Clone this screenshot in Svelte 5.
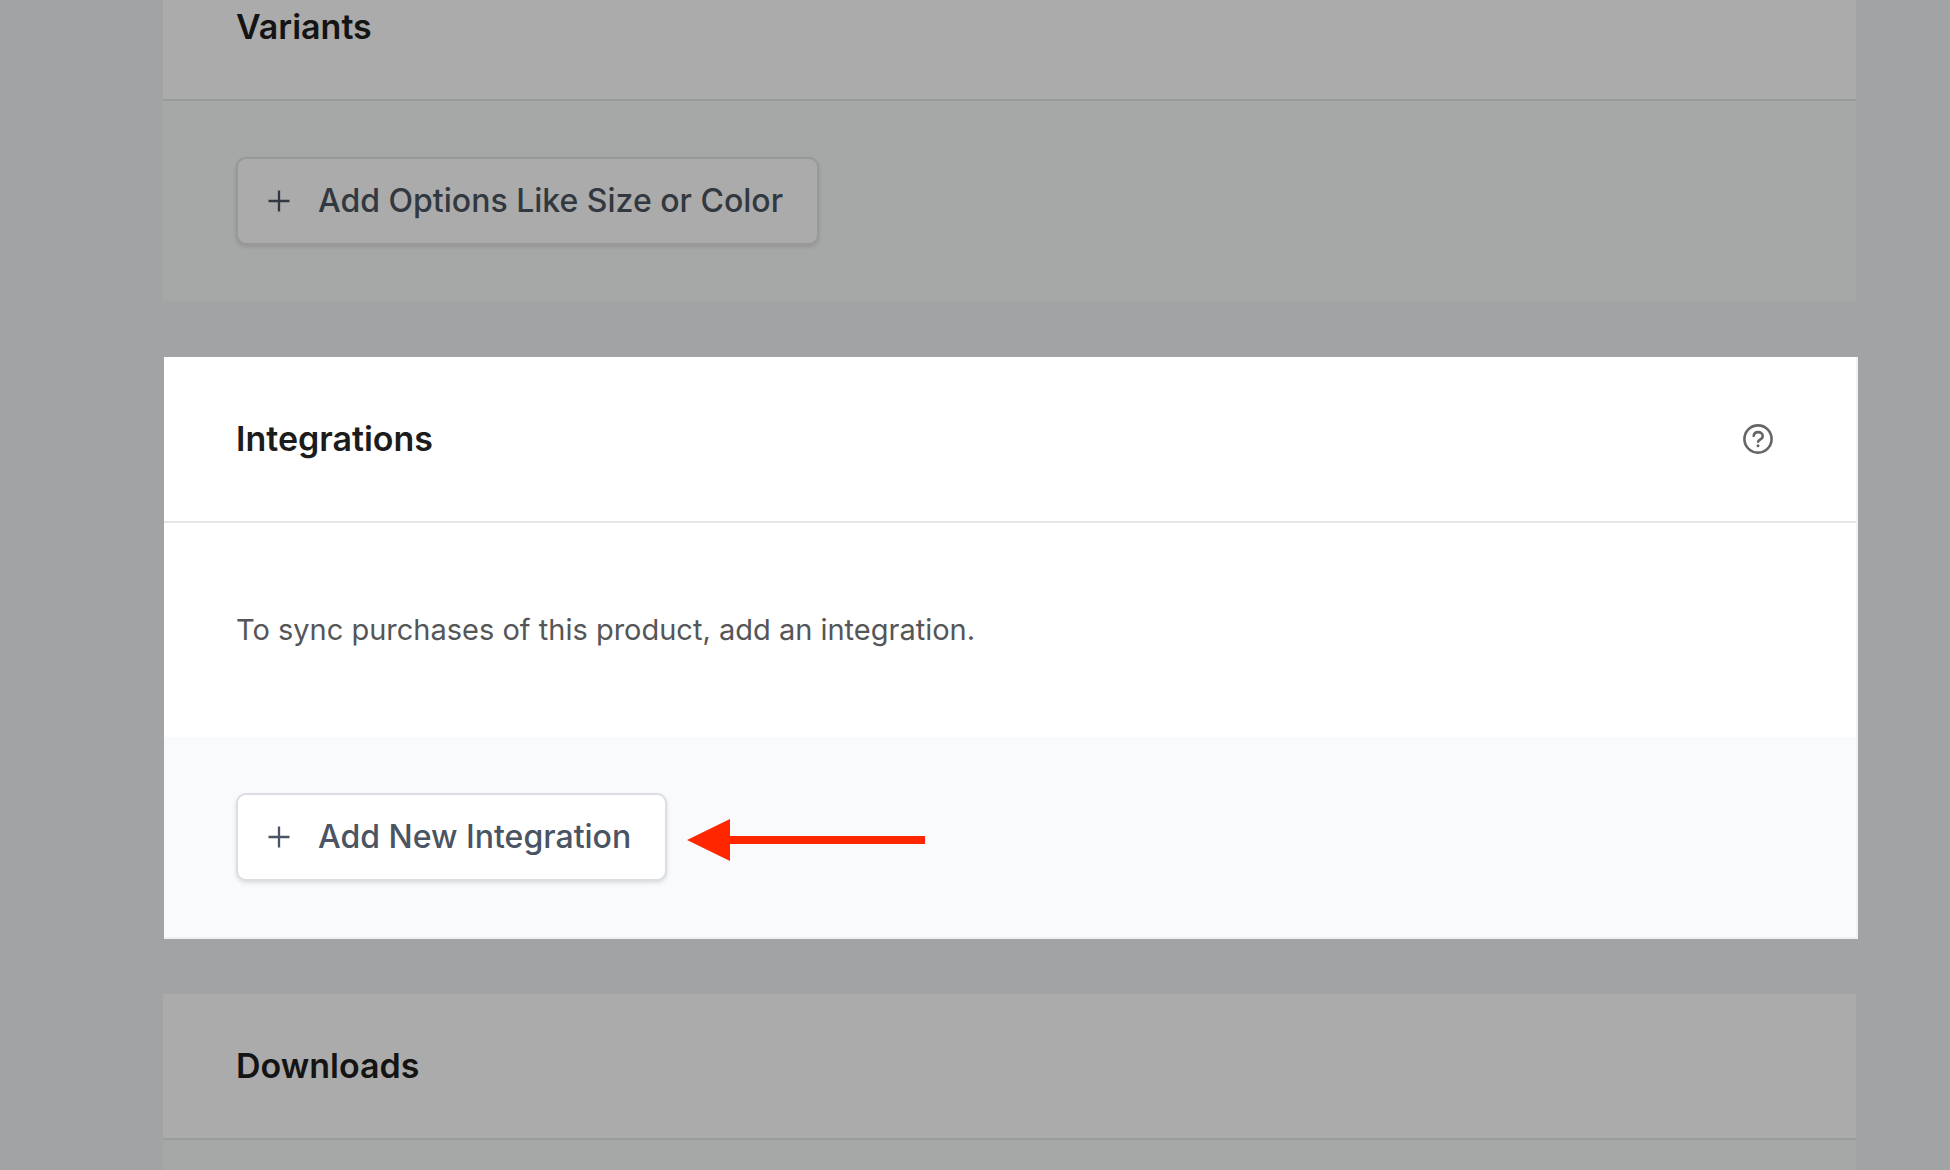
<script>
  let integrations = $state([]);
</script>

{#snippet plus()}
  <svg class="plus" viewBox="0 0 24 24" aria-hidden="true">
    <path d="M12 1.5v21M1.5 12h21" />
  </svg>
{/snippet}

<main class="page">
  <section class="card dimmed scrolled" aria-labelledby="variants">
    <header><h2 id="variants">Variants</h2></header>
    <div class="actions">
      <button type="button" class="add">{@render plus()}Add Options Like Size or Color</button>
    </div>
  </section>

  <section class="card focused" aria-labelledby="integrations">
    <header>
      <h2 id="integrations">Integrations</h2>
      <button type="button" class="help" aria-label="Help with integrations">
        <svg viewBox="0 0 30 30" aria-hidden="true">
          <circle cx="15" cy="15" r="13.6" />
          <path d="M10.7 11.9C11 9.5 12.7 8.1 15.1 8.1c2.6 0 4.6 1.6 4.6 4 0 1.8-1 2.7-2.6 3.6-1.3.8-1.9 1.3-2 2" />
          <circle class="dot" cx="15" cy="21.8" r="1.5" />
        </svg>
      </button>
    </header>
    {#if integrations.length === 0}
      <p class="empty">To sync purchases of this product, add an integration.</p>
    {/if}
    <div class="actions">
      <button type="button" class="add">{@render plus()}Add New Integration</button>
      <svg class="arrow" viewBox="0 0 238 48" aria-hidden="true">
        <path d="M0 27 43 6v17h195v8H43v17z" />
      </svg>
    </div>
  </section>

  <section class="card dimmed" aria-labelledby="downloads">
    <header><h2 id="downloads">Downloads</h2></header>
    <div class="actions"></div>
  </section>
</main>

<style>
  :global(body) {
    background: #a2a3a5;
  }
  .page {
    box-sizing: border-box;
    height: 100vh;
    overflow: hidden;
    padding: 0 94px 0 163px;
    font-family: Inter, 'Liberation Sans', sans-serif;
  }
  .card {
    --surface: #ababab;
    --footer: #a6a8a7;
    --rule: #999b9c;
    --edge: #96989c;
    --heading: #141414;
    --label: #323840;
    background: var(--surface);
  }
  .focused {
    --surface: #ffffff;
    --footer: #f8fafc;
    --rule: #e5e6e7;
    --edge: #dcdee4;
    --heading: #1c1c1d;
    --label: #4a5462;
    margin: 56px -2px 55px 1px;
    border: solid #f0f1f3;
    border-width: 0 2px 2px 0;
  }
  header {
    display: flex;
    align-items: center;
    justify-content: space-between;
    padding: 52px 73px;
    border-bottom: 2px solid var(--rule);
  }
  .scrolled header {
    padding-top: 7px;
  }
  .focused header {
    padding: 62px 83px 62px 72px;
  }
  h2 {
    margin: 0;
    color: var(--heading);
    font-size: 34px;
    line-height: 40px;
    font-weight: 600;
  }
  .help {
    display: flex;
    padding: 0;
    border: 0;
    background: none;
    cursor: pointer;
  }
  .help svg {
    width: 30px;
    height: 30px;
    fill: none;
    stroke: #666;
    stroke-width: 2.6;
    stroke-linecap: round;
  }
  .help .dot {
    fill: #666;
    stroke: none;
  }
  .empty {
    margin: 0;
    padding: 87px 72px;
    color: #555657;
    font-size: 29px;
    line-height: 40px;
  }
  .actions {
    display: flex;
    align-items: center;
    gap: 20px;
    min-height: 88px;
    padding: 56px 73px;
    background: var(--footer);
  }
  .focused .actions {
    padding: 56px 72px;
  }
  .add {
    display: flex;
    align-items: center;
    gap: 27px;
    padding: 22px 34px 22px 29px;
    border: 2px solid var(--edge);
    border-radius: 10px;
    background: var(--surface);
    box-shadow: 0 2px 4px rgb(0 0 0 / 0.12);
    color: var(--label);
    font-family: inherit;
    font-size: 32px;
    line-height: 40px;
    font-weight: 500;
    cursor: pointer;
  }
  .plus {
    width: 24px;
    height: 24px;
    fill: none;
    stroke: currentColor;
    stroke-width: 2.3;
  }
  .arrow {
    width: 238px;
    height: 48px;
    fill: #ff2600;
  }
</style>
